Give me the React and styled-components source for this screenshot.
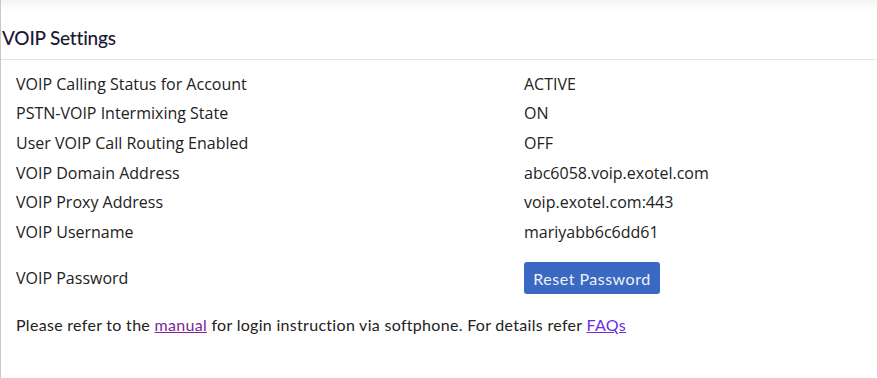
import styled, { createGlobalStyle } from "styled-components";

const GlobalStyle = createGlobalStyle`
	html, body {
		margin: 0;
		padding: 0;
		background: #ffffff;
	}
`;

const Page = styled.div`
	height: 378px;
	box-sizing: border-box;
	border-left: 1px solid #c8c8c8;
	background: linear-gradient(to bottom, #f3f3f3 0px, #fbfbfb 6px, #ffffff 12px);
	padding-top: 26px;
`;

const Header = styled.div`
	border-bottom: 1px solid #e6e6e6;
	padding: 0 0 9px 1px;
`;

const Title = styled.h4`
	margin: 0;
	font-family: "Lato", sans-serif;
	font-weight: 500;
	font-size: 19px;
	line-height: 24px;
	color: #1b1836;
	letter-spacing: -0.2px;
`;

const Table = styled.div`
	display: grid;
	grid-template-columns: 508px 1fr;
	padding: 9px 0 0 15px;
`;

const Cell = styled.div`
	font-family: "Open Sans", sans-serif;
	font-size: 16px;
	color: #222222;
	height: ${({ $tall }) => ($tall ? "62px" : "29.6px")};
	display: flex;
	align-items: center;
	padding-top: ${({ $tall }) => ($tall ? "1px" : "0")};
	box-sizing: border-box;
`;

const Button = styled.button`
	font-family: "Lato", sans-serif;
	font-size: 16px;
	letter-spacing: 0.5px;
	color: #f2f2f2;
	background: #3a69c3;
	border: none;
	border-radius: 3px;
	height: 32px;
	padding: 0;
	width: 136px;
`;

const Footer = styled.p`
	margin: 0;
	padding: 6px 0 0 15px;
	font-family: "Lato", sans-serif;
	font-size: 16px;
	color: #222222;
	letter-spacing: 0.3px;
`;

const Link = styled.a`
	color: ${({ $visited }) => ($visited ? "#7b2696" : "#6a2ee0")};
	text-decoration: underline;
`;

const rows = [
	["VOIP Calling Status for Account", "ACTIVE"],
	["PSTN-VOIP Intermixing State", "ON"],
	["User VOIP Call Routing Enabled", "OFF"],
	["VOIP Domain Address", "abc6058.voip.exotel.com"],
	["VOIP Proxy Address", "voip.exotel.com:443"],
	["VOIP Username", "mariyabb6c6dd61"],
];

export default function App() {
	return (
		<>
			<GlobalStyle />
			<Page>
				<Header>
					<Title>VOIP Settings</Title>
				</Header>
				<Table>
					{rows.flatMap(([label, value]) => [
						<Cell key={label}>{label}</Cell>,
						<Cell key={label + "-value"}>{value}</Cell>,
					])}
					<Cell $tall>VOIP Password</Cell>
					<Cell $tall>
						<Button>Reset Password</Button>
					</Cell>
				</Table>
				<Footer>
					Please refer to the <Link $visited>manual</Link> for login instruction via softphone. For details refer{" "}
					<Link>FAQs</Link>
				</Footer>
			</Page>
		</>
	);
}
